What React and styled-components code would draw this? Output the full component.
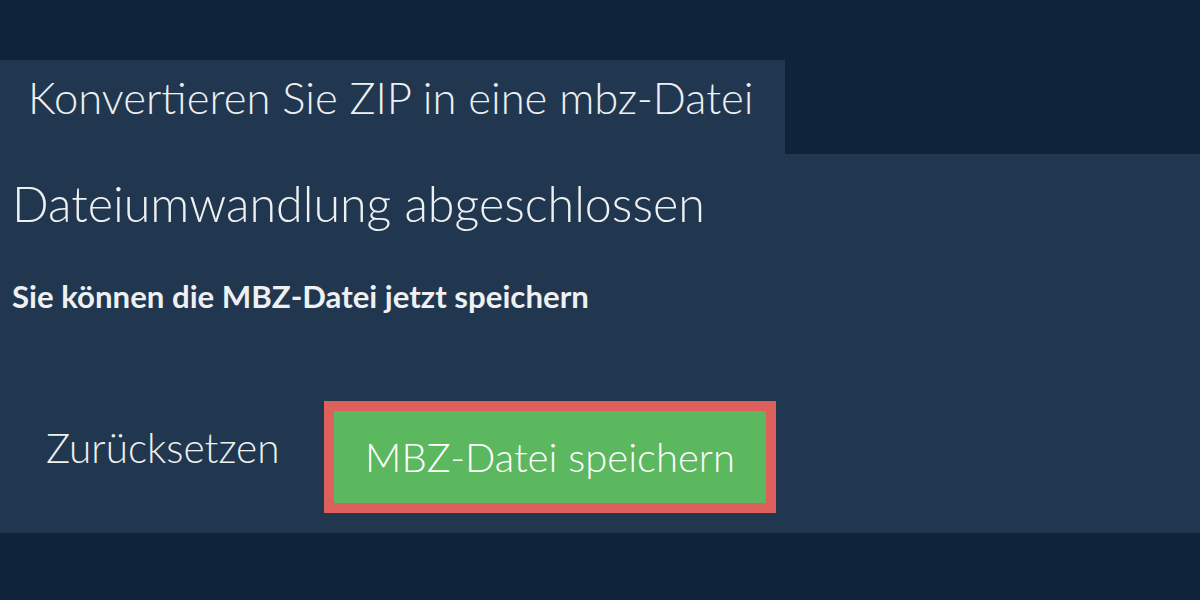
import React from "react";
import styled, { createGlobalStyle } from "styled-components";

const Global = createGlobalStyle`
  html, body {
    margin: 0;
    padding: 0;
    background: #0f233a;
    font-family: Lato, "Open Sans", sans-serif;
  }
`;

const Page = styled.div`
  padding-top: 60px;
  width: 1200px;
  height: 600px;
  box-sizing: border-box;
  background: #0f233a;
`;

const Tab = styled.div`
  display: inline-block;
  vertical-align: top;
  background: #213750;
  padding: 11px 32px 31px 28px;
  height: 94px;
  box-sizing: border-box;
`;

const TabTitle = styled.h1`
  margin: 0;
  font-size: 43.6px;
  line-height: 52px;
  font-weight: 300;
  color: #eef0f2;
  white-space: nowrap;
`;

const Panel = styled.section`
  background: #213750;
  padding: 20px 12px 20px 12px;
  box-sizing: border-box;
  height: 379px;
`;

const Heading = styled.h2`
  margin: 0;
  font-size: 48.4px;
  line-height: 58px;
  font-weight: 300;
  color: #eef0f2;
`;

const Sub = styled.p`
  margin: 46px 0 0;
  font-size: 31.2px;
  line-height: 37px;
  font-weight: 700;
  color: #eef0f2;
`;

const Actions = styled.div`
  display: flex;
  align-items: flex-start;
  margin-top: 86px;
`;

const ResetButton = styled.button`
  margin: 23px 0 0;
  padding: 0 0 0 34px;
  width: 312px;
  text-align: left;
  background: none;
  border: none;
  font-family: inherit;
  font-size: 40.5px;
  line-height: 48px;
  font-weight: 300;
  color: #eef0f2;
  cursor: pointer;
`;

const SaveButton = styled.button`
  width: 452px;
  height: 112px;
  box-sizing: border-box;
  border: 10px solid #dd605c;
  background: #5cb85f;
  color: #ffffff;
  font-family: inherit;
  font-size: 40px;
  line-height: 92px;
  font-weight: 300;
  padding: 0;
  cursor: pointer;
`;

export default function App() {
  return (
    <>
      <Global />
      <Page>
        <Tab>
          <TabTitle>Konvertieren Sie ZIP in eine mbz-Datei</TabTitle>
        </Tab>
        <Panel>
          <Heading>Dateiumwandlung abgeschlossen</Heading>
          <Sub>Sie können die MBZ-Datei jetzt speichern</Sub>
          <Actions>
            <ResetButton>Zurücksetzen</ResetButton>
            <SaveButton>MBZ-Datei speichern</SaveButton>
          </Actions>
        </Panel>
      </Page>
    </>
  );
}
